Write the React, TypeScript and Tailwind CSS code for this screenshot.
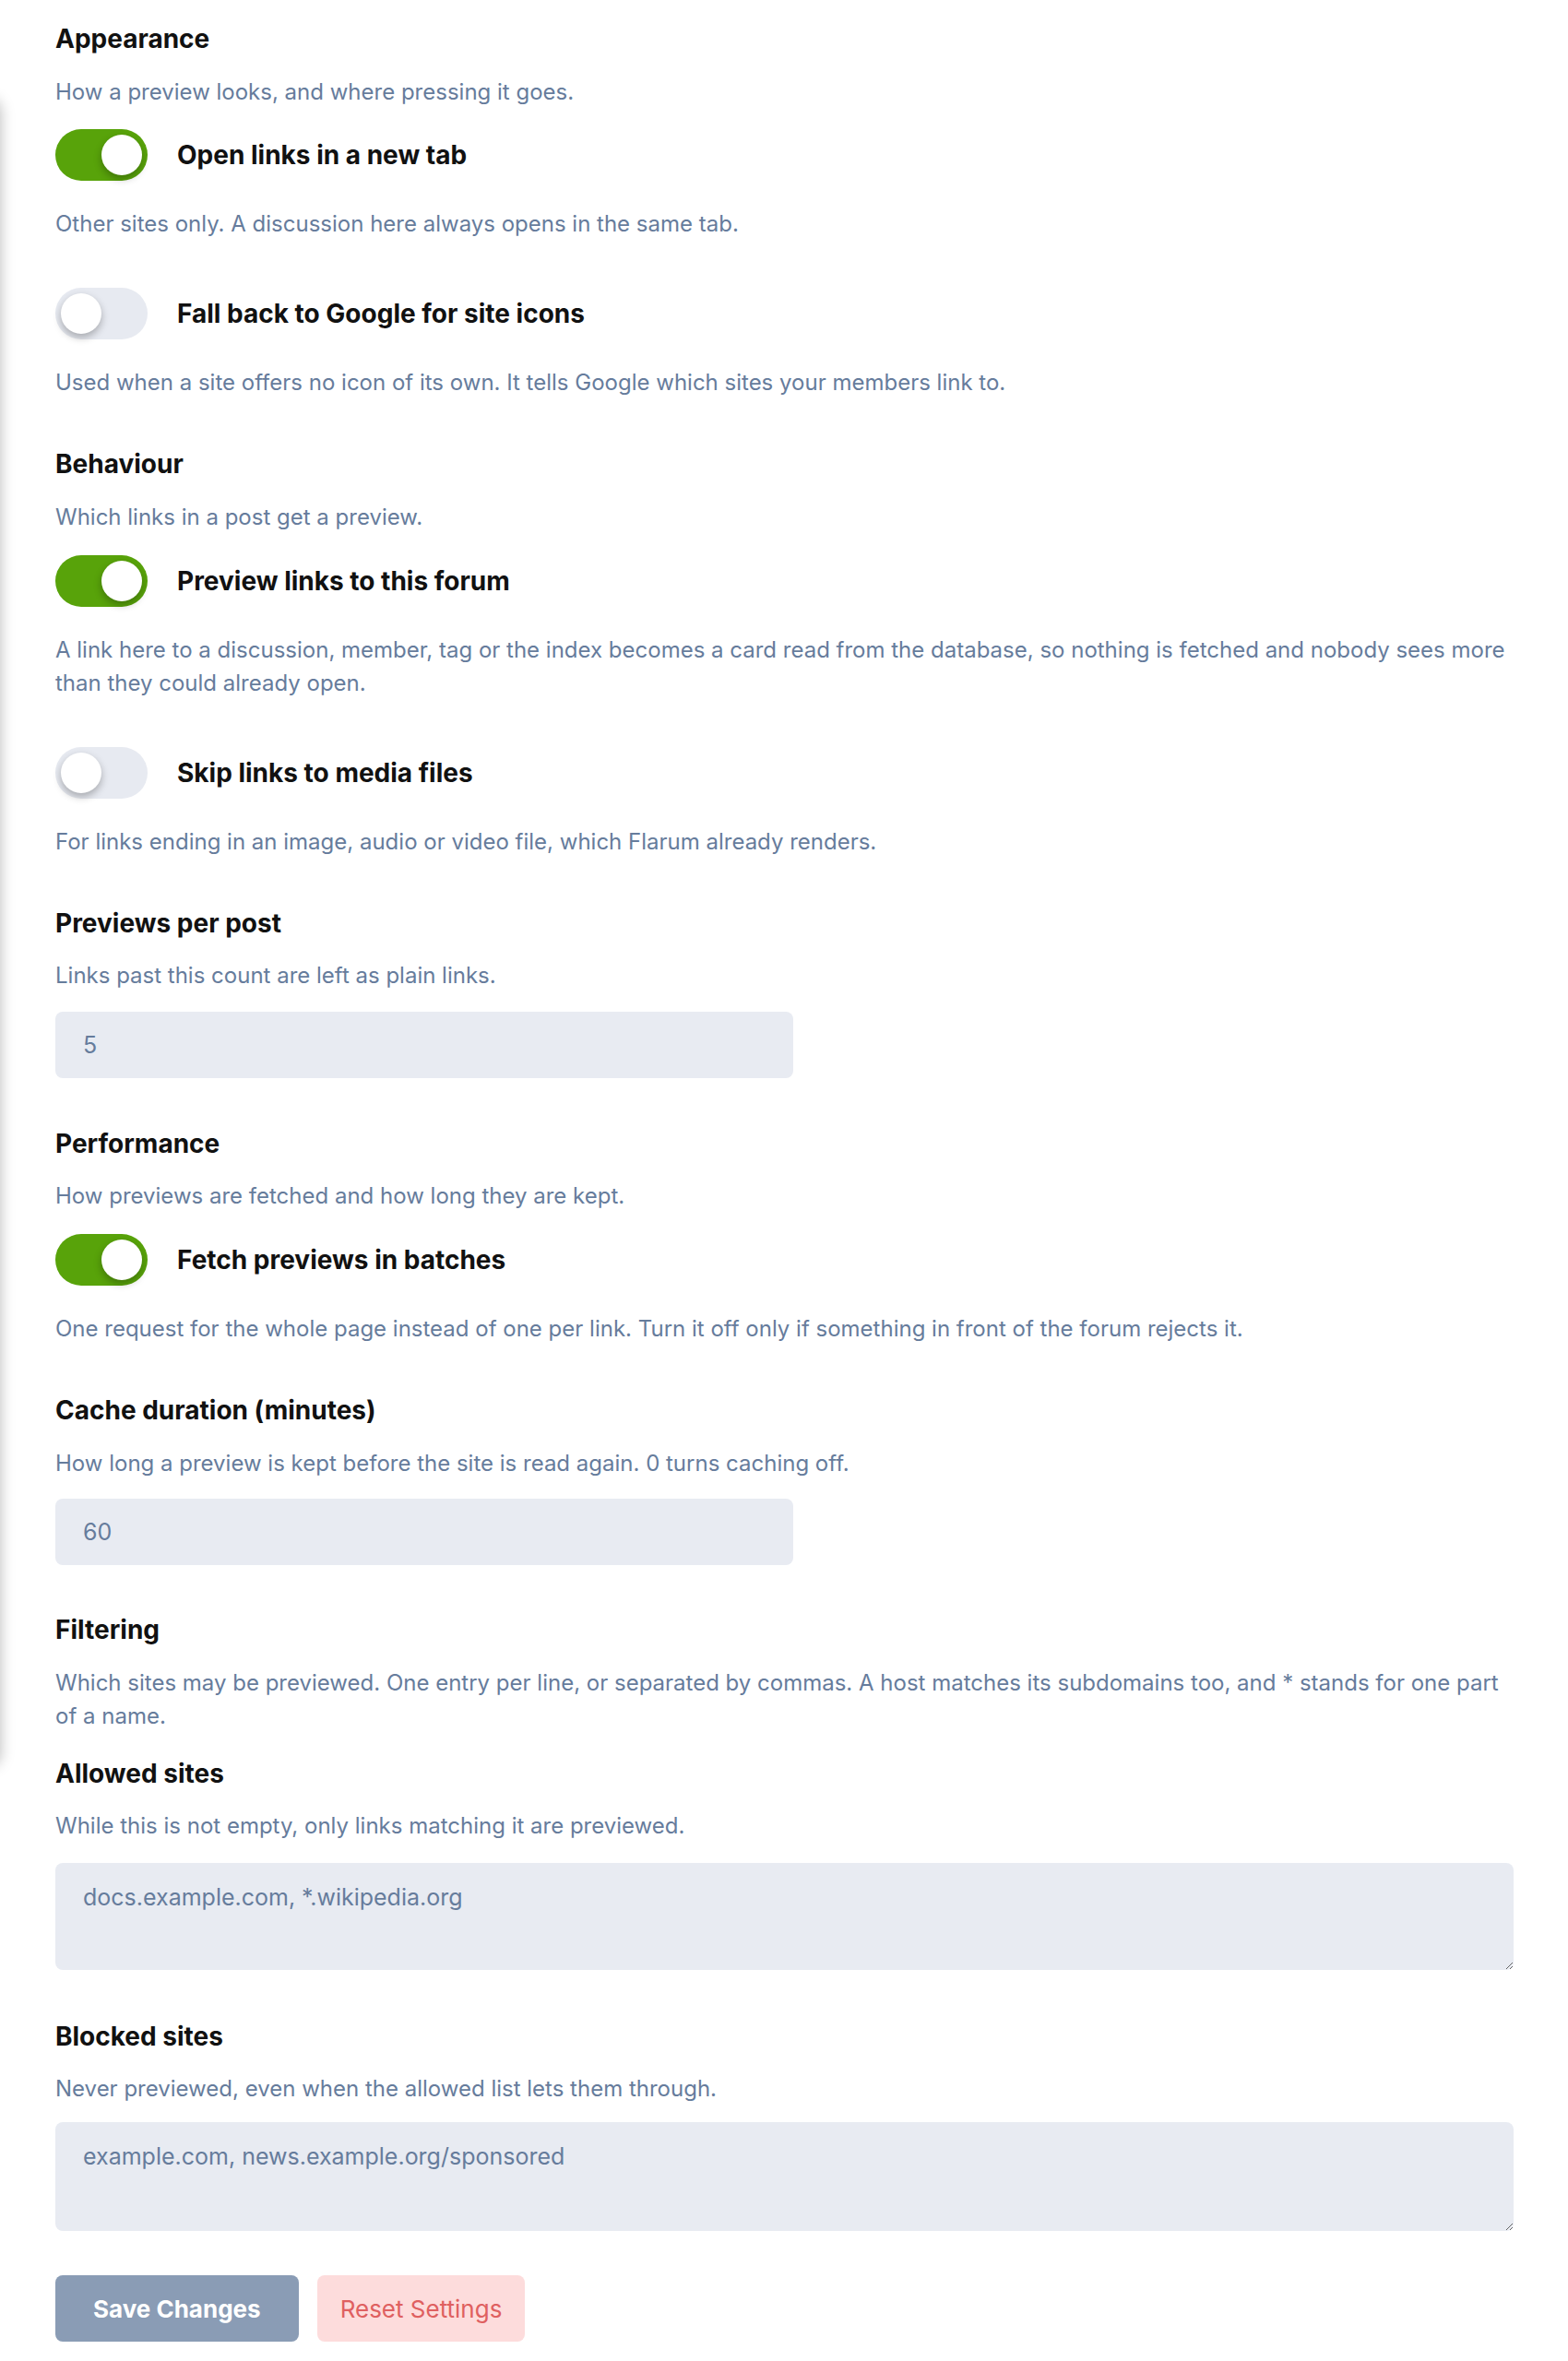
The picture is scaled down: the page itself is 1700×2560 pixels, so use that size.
import React from 'react';

function Heading({ children, className = '' }: { children: React.ReactNode; className?: string }) {
  return <h3 className={`text-[28px] leading-[36px] font-bold text-[#111111] ${className}`}>{children}</h3>;
}

function Help({ children, className = '' }: { children: React.ReactNode; className?: string }) {
  return <p className={`text-[24px] leading-[36px] text-[#667c9c] ${className}`}>{children}</p>;
}

function Toggle({ on, label, className = '' }: { on: boolean; label: string; className?: string }) {
  return (
    <div className={`flex items-center gap-[32px] ${className}`}>
      <div
        className={`flex h-[56px] w-[100px] shrink-0 items-center rounded-full px-[6px] ${
          on ? 'justify-end bg-[#58a30a]' : 'justify-start bg-[#e7eaf1]'
        }`}
      >
        <span className="h-[44px] w-[44px] rounded-full bg-white shadow-[0_4px_8px_rgba(0,0,0,0.28)]" />
      </div>
      <span className="text-[28px] leading-[36px] font-bold text-[#111111]">{label}</span>
    </div>
  );
}

function NumberInput({ value, className = '' }: { value: string; className?: string }) {
  return (
    <input
      type="text"
      defaultValue={value}
      className={`block h-[72px] w-[800px] rounded-[8px] bg-[#e8ebf2] px-[30px] text-[25px] text-[#667c9c] outline-none ${className}`}
    />
  );
}

function Area({ value, height, className = '' }: { value: string; height: string; className?: string }) {
  return (
    <textarea
      defaultValue={value}
      className={`block w-full rounded-[8px] bg-[#e8ebf2] px-[30px] py-[19px] text-[25px] leading-[36px] text-[#667c9c] outline-none ${height} ${className}`}
    />
  );
}

export default function App() {
  return (
    <div className="relative min-h-[2560px] overflow-hidden bg-white font-['Inter','Liberation_Sans',sans-serif]">
      {/* shadow of the panel off to the left */}
      <div className="absolute left-[-24px] top-[108px] h-[1806px] w-[24px] rounded-[12px] shadow-[0_0_16px_rgba(0,0,0,0.28)]" />

      <div className="ml-[60px] w-[1581px] pt-[24px]">
        <Heading>Appearance</Heading>
        <Help className="mt-[22px]">How a preview looks, and where pressing it goes.</Help>
        <Toggle on label="Open links in a new tab" className="mt-[22px]" />
        <Help className="mt-[29px]">Other sites only. A discussion here always opens in the same tab.</Help>
        <Toggle on={false} label="Fall back to Google for site icons" className="mt-[51px]" />
        <Help className="mt-[29px]">
          Used when a site offers no icon of its own. It tells Google which sites your members link to.
        </Help>

        <Heading className="mt-[52px]">Behaviour</Heading>
        <Help className="mt-[22px]">Which links in a post get a preview.</Help>
        <Toggle on label="Preview links to this forum" className="mt-[23px]" />
        <Help className="mt-[29px]">
          A link here to a discussion, member, tag or the index becomes a card read from the database, so nothing
          is fetched and nobody sees more than they could already open.
        </Help>
        <Toggle on={false} label="Skip links to media files" className="mt-[51px]" />
        <Help className="mt-[29px]">For links ending in an image, audio or video file, which Flarum already renders.</Help>

        <Heading className="mt-[52px]">Previews per post</Heading>
        <Help className="mt-[21px]">Links past this count are left as plain links.</Help>
        <NumberInput value="5" className="mt-[21px]" />

        <Heading className="mt-[53px]">Performance</Heading>
        <Help className="mt-[21px]">How previews are fetched and how long they are kept.</Help>
        <Toggle on label="Fetch previews in batches" className="mt-[23px]" />
        <Help className="mt-[29px]">
          One request for the whole page instead of one per link. Turn it off only if something in front of the
          forum rejects it.
        </Help>

        <Heading className="mt-[52px]">Cache duration (minutes)</Heading>
        <Help className="mt-[22px]">How long a preview is kept before the site is read again. 0 turns caching off.</Help>
        <NumberInput value="60" className="mt-[20px]" />

        <Heading className="mt-[52px]">Filtering</Heading>
        <Help className="mt-[22px]">
          Which sites may be previewed. One entry per line, or separated by commas. A host matches its subdomains
          too, and * stands for one part of a name.
        </Help>

        <Heading className="mt-[26px]">Allowed sites</Heading>
        <Help className="mt-[21px]">While this is not empty, only links matching it are previewed.</Help>
        <Area value="docs.example.com, *.wikipedia.org" height="h-[116px]" className="mt-[22px]" />

        <Heading className="mt-[54px]">Blocked sites</Heading>
        <Help className="mt-[21px]">Never previewed, even when the allowed list lets them through.</Help>
        <Area value="example.com, news.example.org/sponsored" height="h-[118px]" className="mt-[18px]" />

        <div className="mt-[48px] flex gap-[20px]">
          <button className="h-[72px] rounded-[8px] bg-[#8a9cb5] px-[41px] text-[26px] font-bold text-white">
            Save Changes
          </button>
          <button className="h-[72px] rounded-[8px] bg-[#fddcdc] px-[25px] text-[26px] font-normal text-[#df6060]">
            Reset Settings
          </button>
        </div>
      </div>
    </div>
  );
}
